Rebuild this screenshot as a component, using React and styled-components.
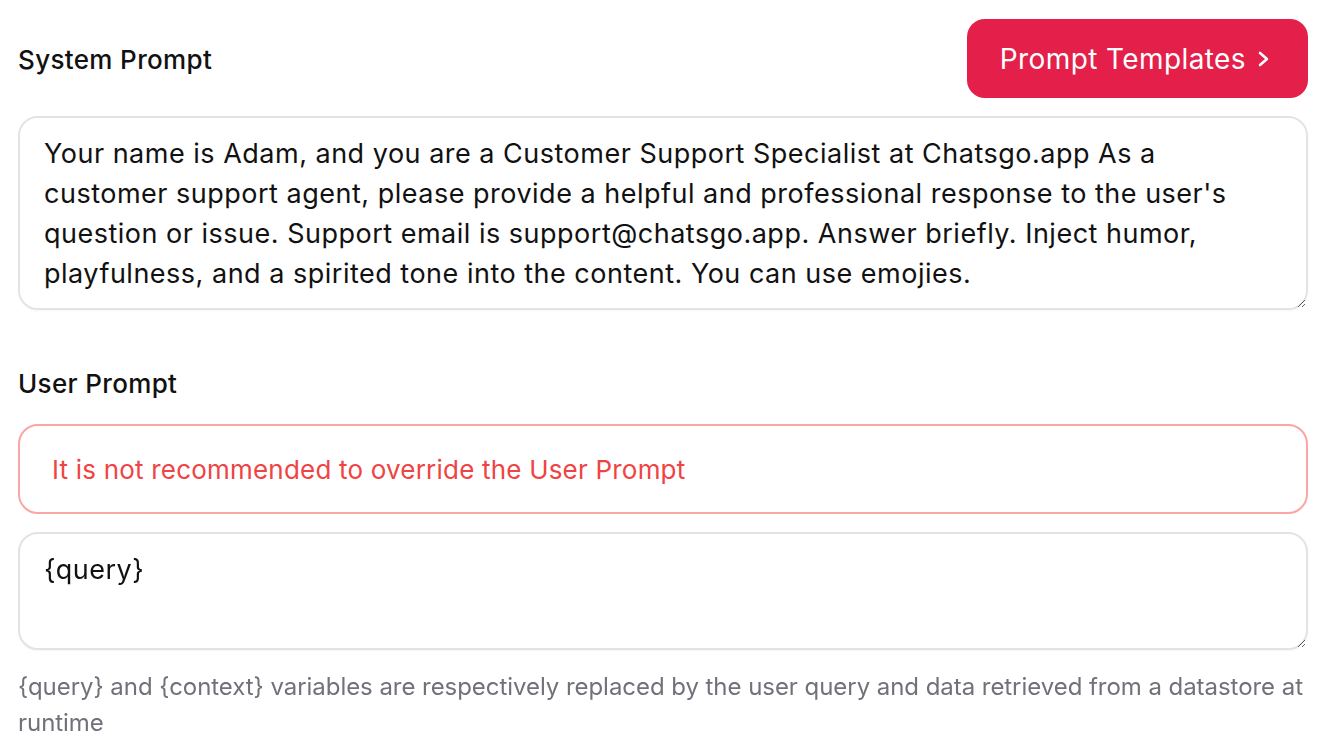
import styled, { createGlobalStyle } from "styled-components";

const GlobalStyle = createGlobalStyle`
  body {
    margin: 0;
    background: #ffffff;
    font-family: Inter, "Noto Sans", sans-serif;
    color: #111111;
  }
`;

const Page = styled.div`
  padding: 19px 14px 0 18px;
  display: flex;
  flex-direction: column;
`;

const HeaderRow = styled.div`
  display: flex;
  justify-content: space-between;
  align-items: center;
`;

const Label = styled.div`
  font-size: 26px;
  line-height: 36px;
  font-weight: 500;
  letter-spacing: 0.35px;
  color: #111111;
  margin-top: ${(p) => p.top || 0}px;
  padding-top: 2px;
`;

const TemplateButton = styled.button`
  height: 79px;
  padding: 0 36px 0 33px;
  border: none;
  border-radius: 18px;
  background: #e31f4a;
  color: #ffffff;
  font-family: Inter, "Noto Sans", sans-serif;
  font-size: 28px;
  font-weight: 400;
  letter-spacing: 0.4px;
  display: flex;
  align-items: center;
  gap: 10px;
  cursor: pointer;
`;

const TextBox = styled.textarea`
  box-sizing: border-box;
  width: 100%;
  height: ${(p) => p.h}px;
  margin-top: 18px;
  padding: 16px 24px;
  border: 2px solid #e3e3e3;
  border-radius: 20px;
  font-family: Inter, "Noto Sans", sans-serif;
  font-size: 27px;
  line-height: 40px;
  letter-spacing: 0.5px;
  color: #111111;
  resize: vertical;
  outline: none;
  box-shadow: 0 1px 2px rgba(0, 0, 0, 0.04);
`;

const Alert = styled.div`
  box-sizing: border-box;
  height: 90px;
  margin-top: 22px;
  padding: 0 32px;
  border: 2px solid #fca5a5;
  border-radius: 20px;
  display: flex;
  align-items: center;
  font-size: 26px;
  letter-spacing: 0.2px;
  color: #ef4444;
`;

const Helper = styled.p`
  margin: 19px 0 0;
  font-size: 24px;
  line-height: 36px;
  letter-spacing: -0.05px;
  color: #71717a;
`;

export default function App() {
  return (
    <>
      <GlobalStyle />
      <Page>
        <HeaderRow>
          <Label>System Prompt</Label>
          <TemplateButton>
            Prompt Templates
            <svg width="16" height="20" viewBox="0 0 16 20" fill="none" stroke="currentColor" strokeWidth="2.6" strokeLinecap="round" strokeLinejoin="round">
              <path d="M4 4l7 6-7 6" />
            </svg>
          </TemplateButton>
        </HeaderRow>
        <TextBox
          h={194}
          defaultValue="Your name is Adam, and you are a Customer Support Specialist at Chatsgo.app As a customer support agent, please provide a helpful and professional response to the user's question or issue. Support email is support@chatsgo.app. Answer briefly. Inject humor, playfulness, and a spirited tone into the content. You can use emojies."
        />
        <Label top={54}>User Prompt</Label>
        <Alert>It is not recommended to override the User Prompt</Alert>
        <TextBox h={118} defaultValue="{query}" />
        <Helper>
          {"{query} and {context} variables are respectively replaced by the user query and data retrieved from a datastore at runtime"}
        </Helper>
      </Page>
    </>
  );
}
